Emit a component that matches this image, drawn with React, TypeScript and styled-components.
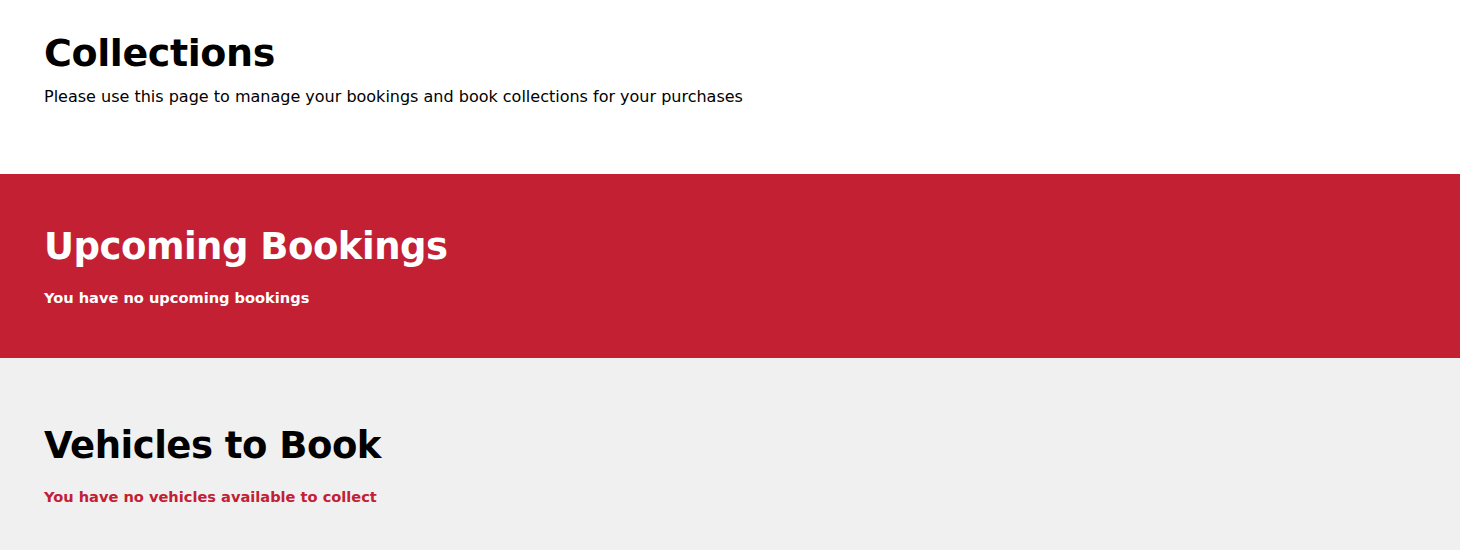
import styled, { createGlobalStyle } from "styled-components";

const GlobalStyle = createGlobalStyle`
  body {
    margin: 0;
    background: #ffffff;
    font-family: "DejaVu Sans", "Open Sans", sans-serif;
  }
`;

const Section = styled.section<{ $tone: "white" | "red" | "grey" }>`
  box-sizing: border-box;
  padding: 0 44px;
  display: flex;
  flex-direction: column;
  background-color: ${(p) =>
    p.$tone === "red" ? "#c32033" : p.$tone === "grey" ? "#f0f0f0" : "#ffffff"};
  color: ${(p) => (p.$tone === "red" ? "#ffffff" : "#000000")};
`;

const Header = styled(Section)`
  height: 174px;
  padding-top: 29px;
`;

const Band = styled(Section)`
  height: 184px;
  padding-top: 49px;
`;

const LastBand = styled(Section)`
  height: 192px;
  padding-top: 64px;
`;

const Title = styled.h1`
  margin: 0;
  font-size: 38px;
  line-height: 48px;
  font-weight: 700;
  letter-spacing: -0.4px;
`;

const Heading = styled.h2`
  margin: 0;
  font-size: 37px;
  line-height: 48px;
  font-weight: 700;
  letter-spacing: -0.5px;
`;

const Intro = styled.p`
  margin: 8px 0 0;
  font-size: 16px;
  line-height: 24px;
`;

const Note = styled.p<{ $red?: boolean }>`
  margin: 15px 0 0;
  font-size: 14.6px;
  line-height: 24px;
  font-weight: 700;
  color: ${(p) => (p.$red ? "#c32033" : "inherit")};
`;

const App = () => {
  return (
    <>
      <GlobalStyle />
      <Header $tone="white">
        <Title>Collections</Title>
        <Intro>
          Please use this page to manage your bookings and book collections for
          your purchases
        </Intro>
      </Header>
      <Band $tone="red">
        <Heading>Upcoming Bookings</Heading>
        <Note>You have no upcoming bookings</Note>
      </Band>
      <LastBand $tone="grey">
        <Heading>Vehicles to Book</Heading>
        <Note $red>You have no vehicles available to collect</Note>
      </LastBand>
    </>
  );
};

export default App;
